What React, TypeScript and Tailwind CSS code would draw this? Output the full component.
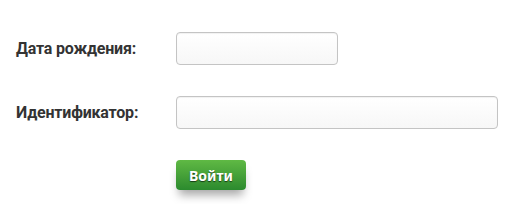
export default function App() {
  return (
    <div className="min-h-[204px] w-[524px] bg-white pt-8 font-['Roboto',sans-serif]">
      <div className="grid grid-cols-[160px_1fr] items-center gap-y-[31px] pl-4">
        <label className="text-[16px] font-bold tracking-[-0.2px] text-[#333]">Дата рождения:</label>
        <input
          type="text"
          className="h-[33px] w-[162px] rounded-[4px] border border-[#c4c4c4] bg-gradient-to-b from-white to-[#f7f7f7] shadow-[inset_0_1px_1px_rgba(0,0,0,0.06)] outline-none"
        />
        <label className="text-[16px] font-bold tracking-[-0.2px] text-[#333]">Идентификатор:</label>
        <input
          type="text"
          className="h-[33px] w-[322px] rounded-[4px] border border-[#c4c4c4] bg-gradient-to-b from-white to-[#f7f7f7] shadow-[inset_0_1px_1px_rgba(0,0,0,0.06)] outline-none"
        />
        <div />
        <button
          type="button"
          className="h-[30px] w-[70px] rounded-[4px] bg-gradient-to-b from-[#5fb944] to-[#2b8a2e] font-['Noto_Sans',sans-serif] text-[14px] font-bold text-white shadow-[0_8px_10px_-3px_rgba(0,0,0,0.35)] [text-shadow:0_1px_1px_rgba(0,0,0,0.6)]"
        >
          Войти
        </button>
      </div>
    </div>
  );
}
